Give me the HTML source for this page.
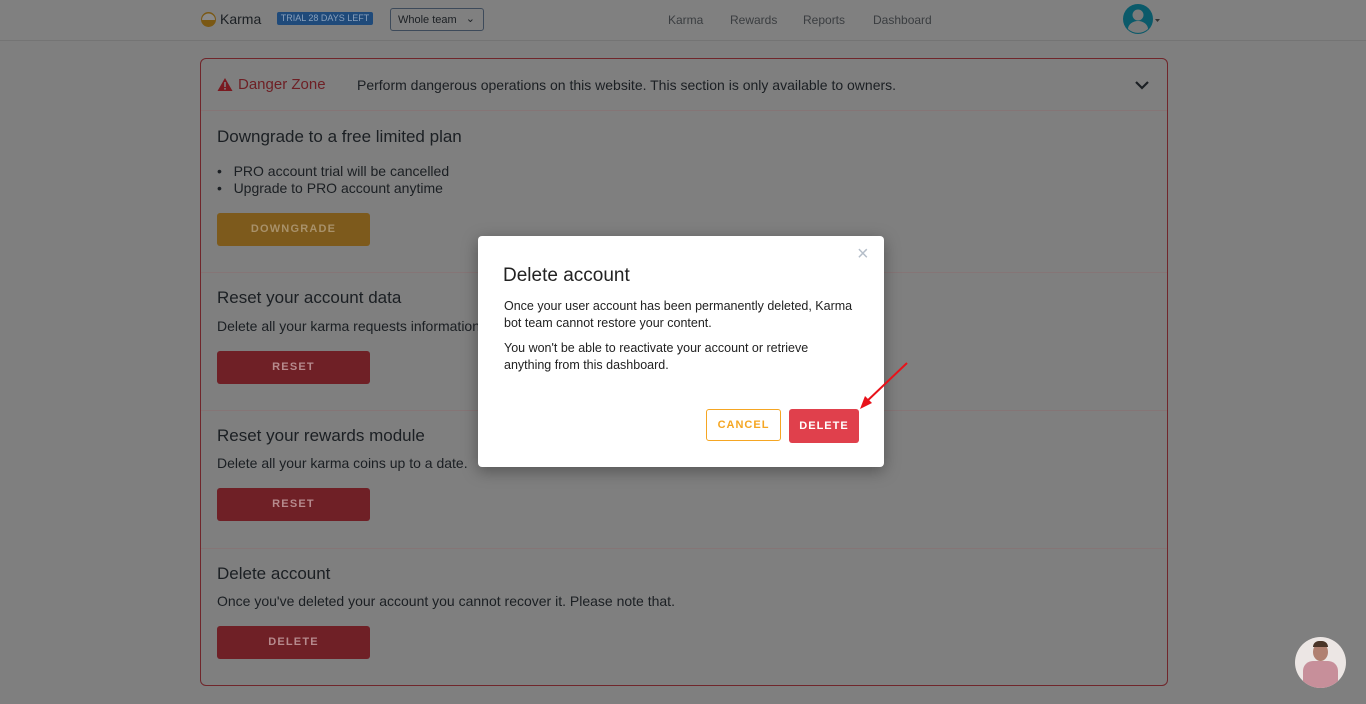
<!DOCTYPE html>
<html><head><style>
*{box-sizing:border-box;margin:0;padding:0}
body{width:1366px;height:704px;overflow:hidden;background:#7f7f7f;font-family:"Liberation Sans",sans-serif;color:#1b1f23;position:relative}
.hdr{position:absolute;left:0;top:0;width:1366px;height:41px;background:#808080;border-bottom:1px solid #747474}
.abs{position:absolute}
.card{position:absolute;left:200px;top:58px;width:968px;height:628px;border:1px solid #70262b;border-radius:6px}
.sep{position:absolute;left:0;width:966px;height:1px;background:#857576}
.h{position:absolute;left:16px;font-size:17px}
.p{position:absolute;left:16px;font-size:14px}
.btn{position:absolute;left:16px;width:153px;height:33px;border-radius:3px;background:#6f2026;color:#b68a8d;font-size:11px;font-weight:bold;letter-spacing:1.2px;text-align:center;line-height:33px}
.nav{position:absolute;top:13px;font-size:12px;color:#3a3d40}
</style></head><body>
<div class="hdr">
 <svg class="abs" style="left:200px;top:11px" width="17" height="17"><circle cx="8.5" cy="8.5" r="7.5" fill="#7a5814"/><path d="M2 9a6.5 6.5 0 0 1 13 0z" fill="#8a8a8a"/><path d="M3 9.5a5.5 5.5 0 0 0 11 0" fill="none" stroke="#7a5814"/></svg>
 <div class="abs" style="left:220px;top:11px;font-size:14px;color:#1b1f23">Karma</div>
 <div class="abs" style="left:277px;top:12px;width:96px;height:13px;background:#1f4a7a;border-radius:2px;color:#8aa0bb;font-size:9px;text-align:center;line-height:13px">TRIAL 28 DAYS LEFT</div>
 <div class="abs" style="left:390px;top:8px;width:94px;height:23px;border:1px solid #3d4a5a;border-radius:3px;font-size:11px;padding:5px 7px;color:#1b1f23">Whole team <span style="position:absolute;right:8px;top:3px">⌄</span></div>
 <div class="nav" style="left:668px">Karma</div>
 <div class="nav" style="left:730px">Rewards</div>
 <div class="nav" style="left:803px">Reports</div>
 <div class="nav" style="left:873px">Dashboard</div>
 <svg class="abs" style="left:1123px;top:4px" width="40" height="32"><circle cx="15" cy="15" r="15" fill="#0b5a6a"/><circle cx="15" cy="11" r="5.5" fill="#7b7b7b"/><path d="M5 25a10 8 0 0 1 20 0a15 15 0 0 1-20 0z" fill="#7b7b7b"/><path d="M32 15h5l-2.5 3z" fill="#333"/></svg>
</div>
<div class="card">
 <svg class="abs" style="left:16px;top:18px" width="16" height="15"><path d="M8 1L15.5 14H.5z" fill="#7a1a20"/><rect x="7.2" y="5" width="1.6" height="5" fill="#7f7f7f"/><rect x="7.2" y="11" width="1.6" height="1.6" fill="#7f7f7f"/></svg>
 <div class="abs" style="left:37px;top:17px;font-size:15px;color:#6e1f24">Danger Zone</div>
 <div class="abs" style="left:156px;top:18px;font-size:14px">Perform dangerous operations on this website. This section is only available to owners.</div>
 <svg class="abs" style="left:933px;top:20px" width="16" height="12"><path d="M2 3l6 6 6-6" fill="none" stroke="#1b1f23" stroke-width="2.2"/></svg>
 <div class="sep" style="top:51px"></div>
 <div class="h" style="top:68px">Downgrade to a free limited plan</div>
 <div class="p" style="top:104px;font-size:14px;line-height:17px">•&nbsp;&nbsp; PRO account trial will be cancelled<br>•&nbsp;&nbsp; Upgrade to PRO account anytime</div>
 <div class="btn" style="top:154px;background:#7d5a1c;color:#a8916a">DOWNGRADE</div>
 <div class="sep" style="top:213px"></div>
 <div class="h" style="top:229px">Reset your account data</div>
 <div class="p" style="top:259px">Delete all your karma requests information</div>
 <div class="btn" style="top:292px">RESET</div>
 <div class="sep" style="top:351px"></div>
 <div class="h" style="top:367px">Reset your rewards module</div>
 <div class="p" style="top:396px">Delete all your karma coins up to a date.</div>
 <div class="btn" style="top:429px">RESET</div>
 <div class="sep" style="top:489px"></div>
 <div class="h" style="top:505px">Delete account</div>
 <div class="p" style="top:534px">Once you've deleted your account you cannot recover it. Please note that.</div>
 <div class="btn" style="top:567px">DELETE</div>
</div>
<div class="abs" style="left:478px;top:236px;width:406px;height:231px;background:#fff;border-radius:4px;box-shadow:0 4px 16px rgba(0,0,0,.35)">
 <div class="abs" style="left:379px;top:7px;font-size:20px;color:#b5bec9">×</div>
 <div class="abs" style="left:25px;top:29px;font-size:19px;color:#222">Delete account</div>
 <div class="abs" style="left:26px;top:62px;font-size:12.5px;line-height:17px;color:#222;width:370px">Once your user account has been permanently deleted, Karma<br>bot team cannot restore your content.</div>
 <div class="abs" style="left:26px;top:104px;font-size:12.5px;line-height:17px;color:#222;width:370px">You won't be able to reactivate your account or retrieve<br>anything from this dashboard.</div>
 <div class="abs" style="left:228px;top:173px;width:75px;height:32px;border:1px solid #f5a623;border-radius:3px;color:#f5a623;font-size:11px;font-weight:bold;letter-spacing:1px;text-align:center;line-height:30px">CANCEL</div>
 <div class="abs" style="left:311px;top:173px;width:70px;height:34px;background:#e0404c;border-radius:3px;color:#fff;font-size:11px;font-weight:bold;letter-spacing:1px;text-align:center;line-height:34px">DELETE</div>
</div>
<svg class="abs" style="left:855px;top:360px" width="56" height="52"><path d="M52 3L10 43" stroke="#e8121a" stroke-width="2"/><path d="M5 49l5-13 7 7z" fill="#e8121a"/></svg>
<div class="abs" style="left:1295px;top:637px;width:51px;height:51px;border-radius:50%;background:#ece6e4;overflow:hidden">
 <div class="abs" style="left:18px;top:6px;width:15px;height:18px;border-radius:50%;background:#b08070"></div>
 <div class="abs" style="left:18px;top:4px;width:15px;height:6px;border-radius:6px 6px 0 0;background:#4a3528"></div>
 <div class="abs" style="left:8px;top:24px;width:35px;height:30px;border-radius:10px 10px 0 0;background:#c78f9a"></div>
</div>
</body></html>
